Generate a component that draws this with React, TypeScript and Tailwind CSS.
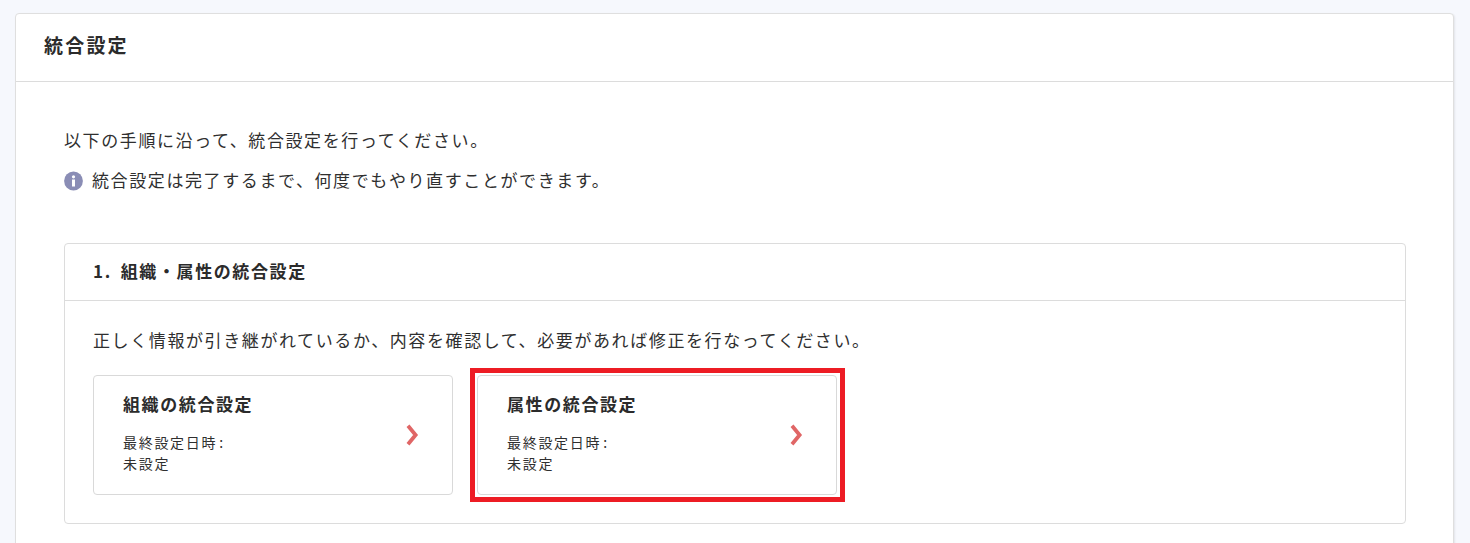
const font = { fontFamily: '"Noto Sans CJK JP", "Noto Sans", sans-serif' };

function Chevron() {
  return (
    <svg width="16" height="22" viewBox="0 0 16 22" fill="none" className="shrink-0">
      <path d="M4 1.8 L11.6 11 L4 20.2" stroke="#e06666" strokeWidth="3.8" strokeLinejoin="miter" />
    </svg>
  );
}

function Card({ title, marked }: { title: string; marked?: boolean }) {
  return (
    <div className="relative flex h-[120px] w-[360px] items-center justify-between rounded-[4px] border border-[#d9d9d9] bg-white pl-[29px] pr-[32px]">
      <div className="self-start pt-[16px]">
        <div className="text-[17px] font-bold leading-[24px] tracking-[1.6px] text-[#2b2b2b]">{title}</div>
        <div className="mt-[16px] text-[14px] leading-[21px] tracking-[1.7px] text-[#2f2f2f]">
          <div>最終設定日時<span className="ml-[2px]">:</span></div>
          <div>未設定</div>
        </div>
      </div>
      <Chevron />
      {marked && <div className="pointer-events-none absolute -left-[8px] -right-[9px] -top-[8px] -bottom-[8px] border-[5px] border-[#ed1c24]" />}
    </div>
  );
}

export default function App() {
  return (
    <div style={font} className="h-[543px] overflow-hidden bg-[#f6f8fd] pl-[15px] pr-[16px] pt-[13px]">
      <div className="rounded-[4px] border border-[#dfdfdf] bg-white shadow-[1px_1px_2px_rgba(0,0,0,0.08)]">
        <div className="flex h-[68px] items-center border-b border-[#dcdcdc] pb-[4px] pl-[28px] text-[19px] font-bold tracking-[2.2px] text-[#2b2b2b]">
          統合設定
        </div>
        <div className="pl-[48px] pr-[47px] pt-[42px] pb-[40px]">
          <p className="text-[17px] leading-[32px] tracking-[1.6px] text-[#2f2f2f]">以下の手順に沿って、統合設定を行ってください。</p>
          <p className="mt-[8px] flex h-[32px] items-center text-[17px] tracking-[1.6px] text-[#2f2f2f]">
            <svg width="20" height="20" viewBox="0 0 20 20" className="mr-[8px] mt-[2px] shrink-0">
              <circle cx="9.5" cy="10" r="9.4" fill="#8a8db5" />
              <circle cx="9.5" cy="5.8" r="1.6" fill="#fff" />
              <rect x="8" y="8.5" width="3" height="7" fill="#fff" />
            </svg>
            統合設定は完了するまで、何度でもやり直すことができます。
          </p>
          <div className="mt-[47px] rounded-[4px] border border-[#dcdcdc]">
            <div className="flex h-[57px] items-center border-b border-[#dcdcdc] pb-[2px] pl-[28px] text-[17px] font-bold tracking-[1.6px] text-[#2b2b2b]">
              <span className="mr-[9px]">1.</span>組織・属性の統合設定
            </div>
            <div className="px-[28px] pt-[23px] pb-[28px]">
              <p className="text-[17px] leading-[32px] tracking-[1.6px] text-[#2f2f2f]">正しく情報が引き継がれているか、内容を確認して、必要があれば修正を行なってください。</p>
              <div className="mt-[19px] flex gap-[24px]">
                <Card title="組織の統合設定" />
                <Card title="属性の統合設定" marked />
              </div>
            </div>
          </div>
        </div>
      </div>
    </div>
  );
}
